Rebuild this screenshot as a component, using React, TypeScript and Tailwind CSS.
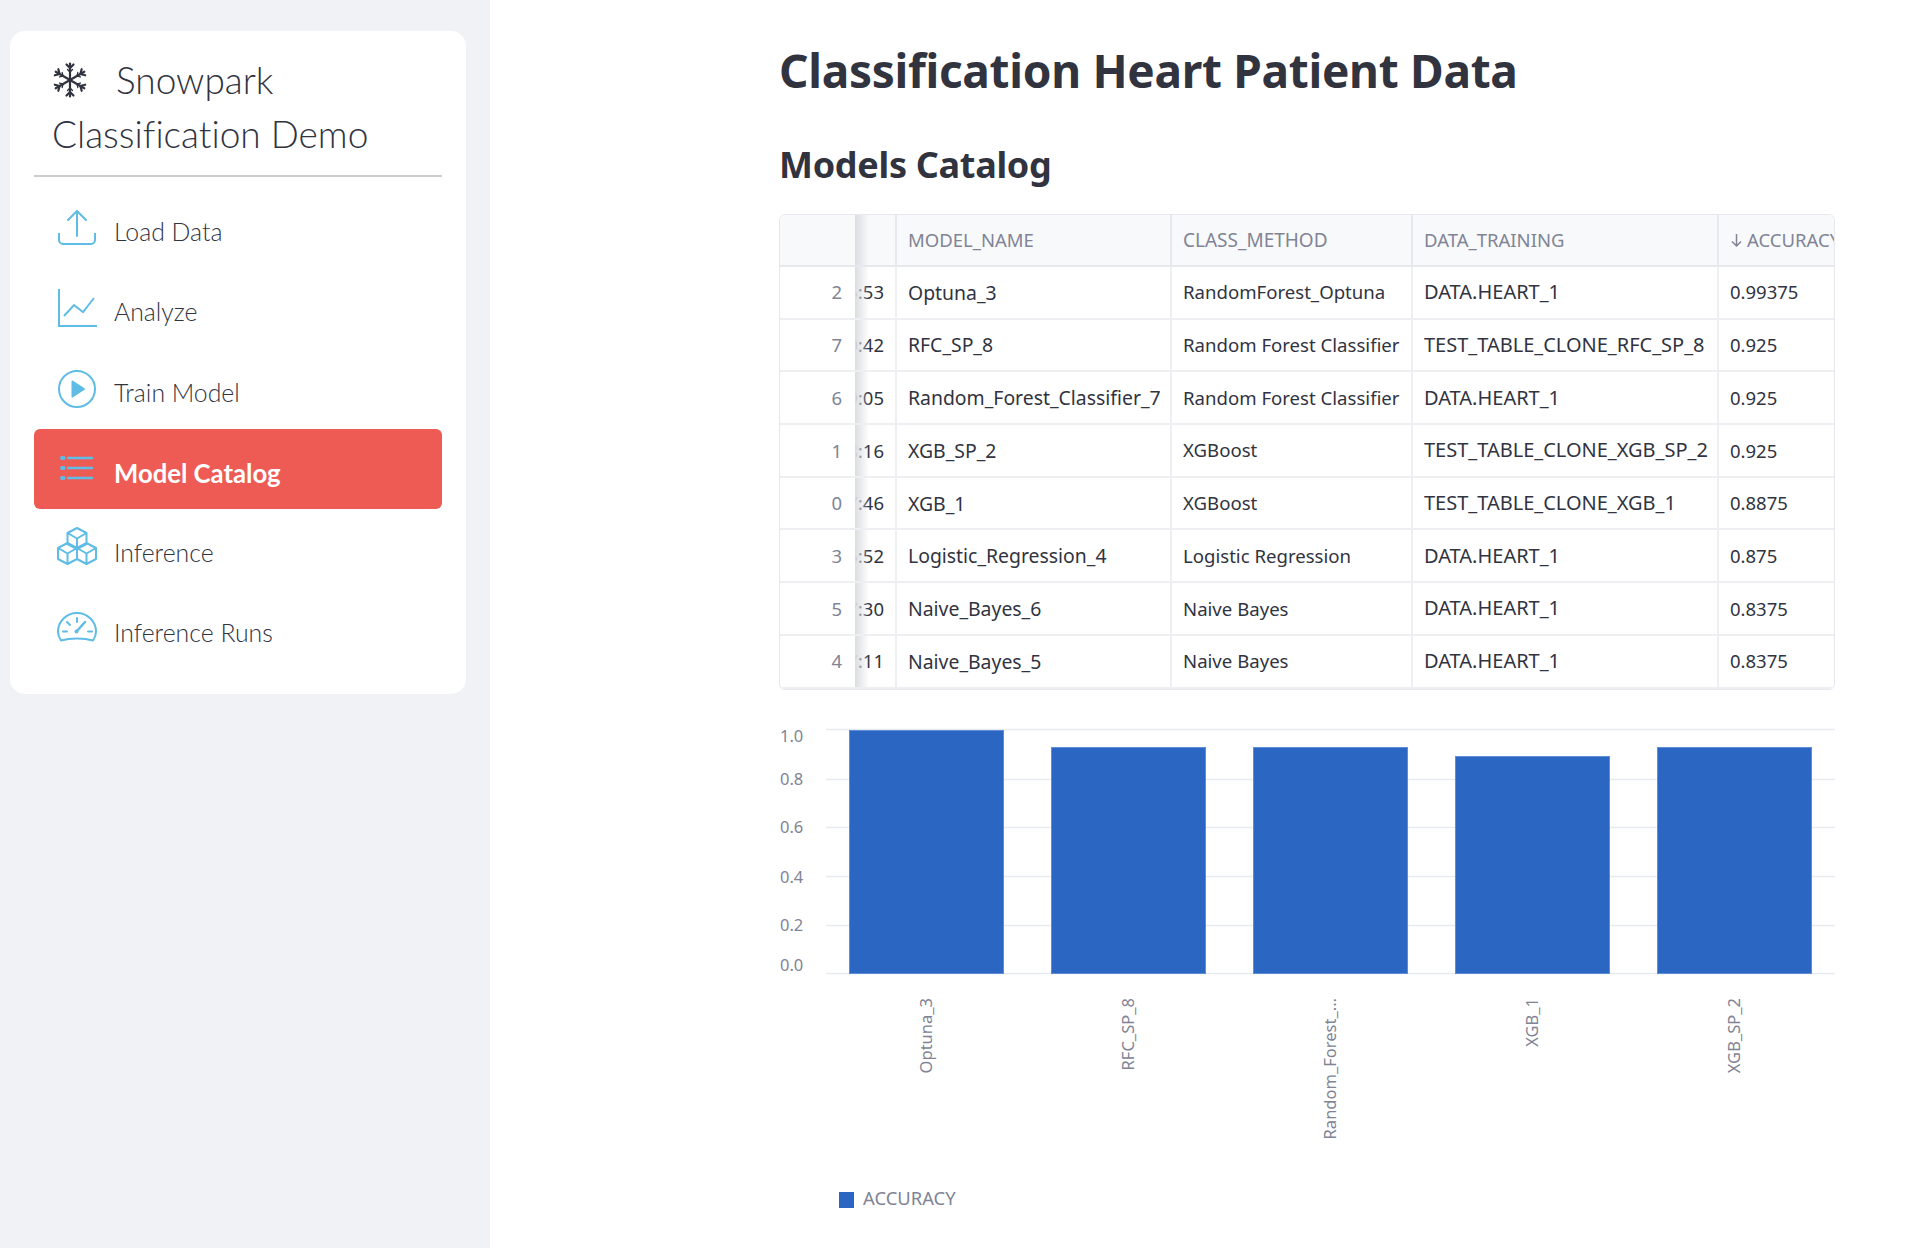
const rows = [
  ["2", "5:53", "Optuna_3", "RandomForest_Optuna", "DATA.HEART_1", "0.99375"],
  ["7", "0:42", "RFC_SP_8", "Random Forest Classifier", "TEST_TABLE_CLONE_RFC_SP_8", "0.925"],
  ["6", "9:05", "Random_Forest_Classifier_7", "Random Forest Classifier", "DATA.HEART_1", "0.925"],
  ["1", "8:16", "XGB_SP_2", "XGBoost", "TEST_TABLE_CLONE_XGB_SP_2", "0.925"],
  ["0", "7:46", "XGB_1", "XGBoost", "TEST_TABLE_CLONE_XGB_1", "0.8875"],
  ["3", "5:52", "Logistic_Regression_4", "Logistic Regression", "DATA.HEART_1", "0.875"],
  ["5", "7:30", "Naive_Bayes_6", "Naive Bayes", "DATA.HEART_1", "0.8375"],
  ["4", "7:11", "Naive_Bayes_5", "Naive Bayes", "DATA.HEART_1", "0.8375"],
];

const ic = { fill: "none", stroke: "#5fbce6", strokeWidth: 2, strokeLinecap: "round" as const, strokeLinejoin: "round" as const };

function UploadIcon() {
  return (
    <svg width="40" height="36" viewBox="0 0 40 36" {...ic}>
      <path d="M20 2v24M11 10l9-9 9 9" />
      <path d="M2 23v7a4 4 0 0 0 4 4h28a4 4 0 0 0 4-4v-7" strokeLinecap="butt" />
    </svg>
  );
}
function ChartIcon() {
  return (
    <svg width="40" height="38" viewBox="0 0 40 38" {...ic} strokeLinecap="butt" strokeLinejoin="miter">
      <path d="M2 0v37h38" />
      <path d="M7 27l10-11 9 7L37 9" />
    </svg>
  );
}
function PlayIcon() {
  return (
    <svg width="40" height="40" viewBox="0 0 40 40" {...ic}>
      <circle cx="20" cy="20" r="18" />
      <path d="M15.500 12.500v15L27 20z" fill="#5fbce6" />
    </svg>
  );
}
function ListIcon() {
  return (
    <svg width="40" height="26" viewBox="0 0 40 26" fill="none">
      <path d="M5 3h1.500M5 13h1.500M5 23h1.500" stroke="#5fbce6" strokeWidth="4" strokeLinecap="round" />
      <path d="M11 3h24M11 13h24M11 23h24" stroke="#5fbce6" strokeWidth="2.500" strokeLinecap="round" />
    </svg>
  );
}
function CubesIcon() {
  return (
    <svg width="40" height="38" viewBox="0 0 40 38" {...ic}>
      <path d="M20 1l9.500 5v11L20 22l-9.500-5V6zM10.500 6L20 11.500 29.500 6M20 11.500V22" />
      <path d="M10.500 16L20 21v11l-9.500 5L1 32V21zM1 21l9.500 5.500L20 21M10.500 26.500V37" />
      <path d="M29.500 16L39 21v11l-9.500 5L20 32V21zM20 21l9.500 5.500L39 21M29.500 26.500V37" />
    </svg>
  );
}
function GaugeIcon() {
  return (
    <svg width="40" height="30" viewBox="0 0 40 30" {...ic}>
      <path d="M4 28.500C1.500 25 1 22 1 19.500 1 9.500 9.500 1 20 1s19 8.500 19 18.500c0 2.500-.5 5.500-3 9-5-1.500-10-2-16-2s-11 .5-16 2z" />
      <path d="M19.500 19.500L28 10" strokeWidth="2.500" />
      <circle cx="19.500" cy="19.500" r="2" fill="#5fbce6" stroke="none" />
      <path d="M20 6v4M10 10l3 3M6 19.500h4M31 19.500h4" />
    </svg>
  );
}
function SnowflakeIcon() {
  const arm = (
    <>
      <path d="M18 18V1.500" />
      <path d="M14.500 2.500L18 6l3.500-3.500" />
      <path d="M15.500 7.500L18 10l2.500-2.500" strokeWidth="1.400" />
    </>
  );
  return (
    <svg width="36" height="38" viewBox="0 0 36 36" fill="none" stroke="#31333f" strokeWidth="2.200" strokeLinecap="round">
      {[0, 60, 120, 180, 240, 300].map((a) => (
        <g key={a} transform={`rotate(${a} 18 18)`}>{arm}</g>
      ))}
    </svg>
  );
}

const nav = [
  { label: "Load Data", icon: <UploadIcon />, cls: "pt-[22px]" },
  { label: "Analyze", icon: <ChartIcon />, cls: "pt-[21px]" },
  { label: "Train Model", icon: <PlayIcon />, cls: "pt-[20px]" },
  { label: "Model Catalog", icon: <ListIcon />, cls: "pt-[26px]", active: true },
  { label: "Inference", icon: <CubesIcon />, cls: "pt-[18px]" },
  { label: "Inference Runs", icon: <GaugeIcon />, cls: "pt-[23px]" },
];

const bars = [
  { x: 849, top: 730, label: "Optuna_3" },
  { x: 1051, top: 747, label: "RFC_SP_8" },
  { x: 1253, top: 747, label: "Random_Forest_..." },
  { x: 1455, top: 756, label: "XGB_1" },
  { x: 1657, top: 747, label: "XGB_SP_2" },
];
const grid = [729, 779, 827, 876, 925, 973];
const ticks: [string, number][] = [["1.0", 742], ["0.8", 785], ["0.6", 833], ["0.4", 883], ["0.2", 931], ["0.0", 971]];

function Chart() {
  const ox = 779, oy = 715;
  return (
    <svg width="1056" height="505" viewBox={`${ox} ${oy} 1056 505`} className="block">
      {grid.map((y) => (
        <line key={y} x1="826" x2="1836" y1={y + 0.5} y2={y + 0.5} stroke="#e8eaf0" strokeWidth="1.500" />
      ))}
      {ticks.map(([t, y]) => (
        <text key={t} x="780" y={y} fontSize="16.5" fill="#808495" fontFamily="'Noto Sans', sans-serif">{t}</text>
      ))}
      {bars.map((b) => (
        <g key={b.x}>
          <rect x={b.x + 0.5} y={b.top + 0.5} width="154" height={973 - b.top} fill="#2b66c2" stroke="#5f8ed8" strokeWidth="1" />
          <text
            transform={`translate(${b.x + 83} 998) rotate(-90)`}
            textAnchor="end"
            fontSize="16.500"
            fill="#808495"
            fontFamily="'Noto Sans', sans-serif"
          >
            {b.label}
          </text>
        </g>
      ))}
      <rect x="839" y="1192" width="15" height="16" fill="#2b66c2" />
      <text x="863" y="1205" fontSize="18.4" fill="#808495" fontFamily="'Noto Sans', sans-serif">ACCURACY</text>
    </svg>
  );
}

export default function App() {
  return (
    <div className="flex min-h-[1248px] bg-white font-['Noto_Sans',sans-serif] text-[#31333f]">
      <aside className="w-[490px] shrink-0 bg-[#f0f2f6] pl-[10px] pt-[31px]">
        <div className="h-[663px] w-[456px] rounded-[15px] bg-white px-[24px]">
          <div className="border-b-2 border-[#cccccc] pb-[14px] pl-[18px] pt-[22px] font-['Lato',sans-serif] text-[37px] font-light leading-[54px] [font-variant-ligatures:none]">
            <div className="flex items-center gap-[28px]">
              <SnowflakeIcon />
              <span>Snowpark</span>
            </div>
            <div>Classification Demo</div>
          </div>
          <nav className="mt-[11px] flex flex-col font-['Lato',sans-serif] [font-variant-ligatures:none]">
            {nav.map((n) => (
              <div
                key={n.label}
                className={`flex h-[80.3px] gap-[17px] rounded-[6px] pl-[23px] ${n.active ? "bg-[#ee5b55] text-[25.7px] font-bold text-white" : "text-[24.8px] font-light"}`}
              >
                <div className={`w-[40px] shrink-0 ${n.cls}`}>{n.icon}</div>
                <div className="pt-[27px] leading-[34px]">{n.label}</div>
              </div>
            ))}
          </nav>
        </div>
      </aside>
      <main className="min-w-0 flex-1 pl-[289px] pr-[77px]">
        <h1 className="pt-[35px] text-[46px] font-bold leading-[70px] tracking-[-0.3px]">Classification Heart Patient Data</h1>
        <h2 className="mt-[34px] text-[36px] font-bold leading-[52px] tracking-[-0.3px]">Models Catalog</h2>
        <div className="mt-[23px] overflow-hidden rounded-[6px] border border-[#e6e8ed] text-[18.5px]">
          <div className="flex h-[52px] border-b-2 border-[#e6e8ed] bg-[#f8f9fb] text-[18.5px] text-[#808495]">
            <div className="w-[75px] shrink-0" />
            <div className="relative w-[42px] shrink-0 border-r-2 border-[#e6e8ed]">
              <div className="absolute inset-y-0 left-0 w-[14px] bg-linear-to-r from-[#dcdde1] to-transparent" />
            </div>
            <div className="flex w-[275px] shrink-0 items-center border-r-2 border-[#e6e8ed] px-[11px]">MODEL_NAME</div>
            <div className="flex w-[241px] shrink-0 items-center border-r-2 border-[#e6e8ed] px-[11px] text-[19px]">CLASS_METHOD</div>
            <div className="flex w-[306px] shrink-0 items-center border-r-2 border-[#e6e8ed] px-[11px]">DATA_TRAINING</div>
            <div className="flex min-w-0 flex-1 items-center overflow-hidden whitespace-nowrap pl-[11px]">
              <svg width="13" height="16" viewBox="0 0 13 16" fill="none" stroke="#808495" strokeWidth="1.500" className="mr-[4px] shrink-0">
                <path d="M6.500 2v12M2 9.500l4.500 4.500L11 9.500" />
              </svg>
              ACCURACY
            </div>
          </div>
          {rows.map((r) => (
            <div key={r[0]} className="flex h-[52.7px] border-b-2 border-[#eeeff2]">
              <div className="flex w-[75px] shrink-0 items-center justify-end pr-[13px] text-[#808495]">{r[0]}</div>
              <div className="relative flex w-[42px] shrink-0 items-center justify-end overflow-hidden border-r-2 border-[#eeeff2] pr-[11px]">
                <span className="shrink-0">{r[1]}</span>
                <div className="absolute inset-y-0 left-0 w-[14px] bg-linear-to-r from-[#dcdde1] to-transparent" />
              </div>
              <div className="flex w-[275px] shrink-0 items-center overflow-hidden whitespace-nowrap border-r-2 border-[#eeeff2] px-[11px] text-[19.4px]">{r[2]}</div>
              <div className="flex w-[241px] shrink-0 items-center overflow-hidden whitespace-nowrap border-r-2 border-[#eeeff2] px-[11px] text-[18.6px]">{r[3]}</div>
              <div className="flex w-[306px] shrink-0 items-center overflow-hidden whitespace-nowrap border-r-2 border-[#eeeff2] px-[11px] text-[20px]">{r[4]}</div>
              <div className="flex min-w-0 flex-1 items-center pl-[11px]">{r[5]}</div>
            </div>
          ))}
        </div>
        <div className="mt-[25.5px]">
          <Chart />
        </div>
      </main>
    </div>
  );
}
